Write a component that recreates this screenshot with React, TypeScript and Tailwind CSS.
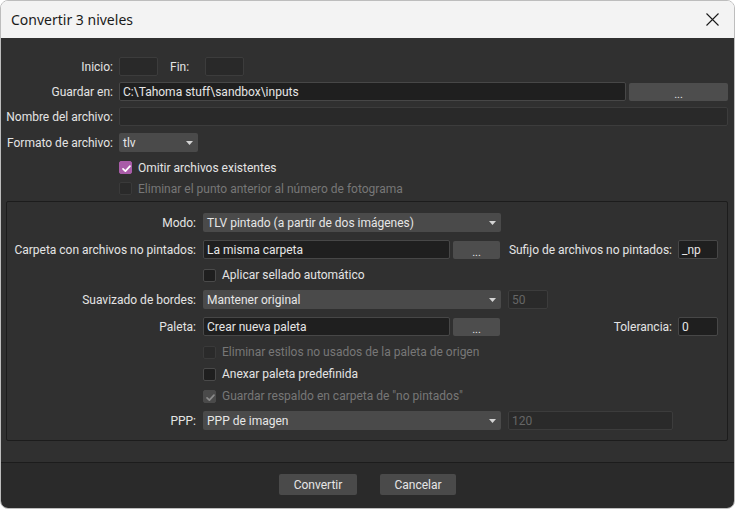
import React from 'react';

const Check = ({ color = '#ffffff' }: { color?: string }) => (
  <svg width="13" height="13" viewBox="0 0 13 13" className="absolute inset-0">
    <polyline points="3,6.8 5.4,9.2 10,4.2" fill="none" stroke={color} strokeWidth="1.7" strokeLinecap="round" strokeLinejoin="round" />
  </svg>
);

interface CheckRowProps {
  label: string;
  checked?: boolean;
  disabled?: boolean;
  h?: string;
}

const CheckRow: React.FC<CheckRowProps> = ({ label, checked, disabled, h = 'h-[22px]' }) => {
  let box = 'bg-[#1f1f1f] border-[#4a4a4a]';
  if (checked && !disabled) box = 'bg-[#a95ca8] border-[#a95ca8]';
  if (disabled && !checked) box = 'bg-[#2a2a2a] border-[#3a3a3a]';
  if (disabled && checked) box = 'bg-[#4a4a4a] border-[#4a4a4a]';
  return (
    <div className={`flex items-center ${h}`}>
      <div className={`relative w-[13px] h-[13px] rounded-[2px] border ${box}`}>
        {checked && <Check color={disabled ? '#8a8a8a' : '#ffffff'} />}
      </div>
      <span className={`ml-[6px] whitespace-nowrap ${disabled ? 'text-[#777777]' : 'text-[#e4e4e4]'}`}>{label}</span>
    </div>
  );
};

const Field = ({ w, value, dark = true, disabled = false }: { w: string; value?: string; dark?: boolean; disabled?: boolean }) => (
  <div
    className={`${w} h-[19px] rounded-[2px] border flex items-center pl-[3px] truncate ${
      disabled
        ? 'bg-[#2a2a2a] border-[#3c3c3c] text-[#666666]'
        : dark
        ? 'bg-[#1f1f1f] border-[#474747] text-[#e6e6e6]'
        : 'bg-[#292929] border-[#3c3c3c] text-[#e6e6e6]'
    }`}
  >
    {value}
  </div>
);

const Select = ({ w, value }: { w: string; value: string }) => (
  <div className={`${w} h-[19px] rounded-[2px] bg-[#4a4a4a] flex items-center justify-between pl-[4px] pr-[5px] text-[#e6e6e6]`}>
    <span>{value}</span>
    <svg width="7" height="4" viewBox="0 0 7 4">
      <polygon points="0,0 7,0 3.5,4" fill="#d4d4d4" />
    </svg>
  </div>
);

const DotsButton = ({ w }: { w: string }) => (
  <div className={`${w} h-[18px] rounded-[2px] bg-[#4d4d4d] flex items-end justify-center pb-[1px] text-[#e6e6e6] leading-none text-[11px]`}>
    ...
  </div>
);

const Label = ({ w, children }: { w: string; children: React.ReactNode }) => (
  <span className={`${w} shrink-0 flex justify-end whitespace-nowrap`}>{children}</span>
);

const App: React.FC = () => {
  return (
    <div className="w-[735px] h-[509px] bg-white">
      <div className="w-[735px] h-[509px] rounded-[8px] border border-[#bdbdbd] overflow-hidden flex flex-col font-['Roboto',sans-serif] text-[12px]">
        <div className="h-[37px] shrink-0 bg-[#f3f3f3] flex items-center justify-between pl-[10px] pr-[15px]">
          <span className="font-['Noto_Sans',sans-serif] text-[14px] text-[#1a1a1a] mt-[-1px]">Convertir 3 niveles</span>
          <svg width="13" height="13" viewBox="0 0 13 13">
            <path d="M0.5 0.5 L12.5 12.5 M12.5 0.5 L0.5 12.5" stroke="#1a1a1a" strokeWidth="1.1" />
          </svg>
        </div>

        <div className="flex-1 bg-[#303030] pl-[5px] pr-[6px] pt-[19px] text-[#e4e4e4]">
          <div className="flex items-center h-[19px]">
            <Label w="w-[107px]">Inicio:</Label>
            <div className="ml-[6px]"><Field w="w-[39px]" dark={false} /></div>
            <span className="ml-[12px] w-[35px]">Fin:</span>
            <Field w="w-[39px]" dark={false} />
          </div>
          <div className="flex items-center h-[19px] mt-[6px]">
            <Label w="w-[107px]">Guardar en:</Label>
            <div className="ml-[6px]"><Field w="w-[507px]" value="C:\Tahoma stuff\sandbox\inputs" /></div>
            <div className="ml-[3px]"><DotsButton w="w-[99px]" /></div>
          </div>
          <div className="flex items-center h-[19px] mt-[6px]">
            <Label w="w-[107px]">Nombre del archivo:</Label>
            <div className="ml-[6px] flex-1"><Field w="w-full" dark={false} /></div>
          </div>
          <div className="flex items-center h-[19px] mt-[7px]">
            <Label w="w-[107px]">Formato de archivo:</Label>
            <div className="ml-[6px]"><Select w="w-[79px]" value="tlv" /></div>
          </div>
          <div className="pl-[113px] mt-[5px]">
            <CheckRow label="Omitir archivos existentes" checked h="h-[21px]" />
            <CheckRow label="Eliminar el punto anterior al número de fotograma" disabled h="h-[21px]" />
          </div>

          <div className="mt-[2px] border border-[#1c1c1c] rounded-[2px] pl-[9px] pr-[9px] pt-[11px] pb-[10px]">
            <div className="flex items-center h-[19px]">
              <Label w="w-[180px]">Modo:</Label>
              <div className="ml-[7px]"><Select w="w-[298px]" value="TLV pintado (a partir de dos imágenes)" /></div>
            </div>
            <div className="flex items-center h-[19px] mt-[8px]">
              <Label w="w-[180px]">Carpeta con archivos no pintados:</Label>
              <div className="ml-[7px]"><Field w="w-[247px]" value="La misma carpeta" /></div>
              <div className="ml-[3px]"><DotsButton w="w-[47px]" /></div>
              <span className="flex-1 text-right whitespace-nowrap">Sufijo de archivos no pintados:</span>
              <div className="ml-[6px]"><Field w="w-[40px]" value="_np" /></div>
            </div>
            <div className="pl-[187px] mt-[5px]">
              <CheckRow label="Aplicar sellado automático" />
            </div>
            <div className="flex items-center h-[19px] mt-[4px]">
              <Label w="w-[180px]">Suavizado de bordes:</Label>
              <div className="ml-[7px]"><Select w="w-[298px]" value="Mantener original" /></div>
              <div className="ml-[7px]"><Field w="w-[40px]" value="50" disabled /></div>
            </div>
            <div className="flex items-center h-[19px] mt-[8px]">
              <Label w="w-[180px]">Paleta:</Label>
              <div className="ml-[7px]"><Field w="w-[247px]" value="Crear nueva paleta" /></div>
              <div className="ml-[3px]"><DotsButton w="w-[47px]" /></div>
              <span className="flex-1 text-right whitespace-nowrap">Tolerancia:</span>
              <div className="ml-[6px]"><Field w="w-[40px]" value="0" /></div>
            </div>
            <div className="pl-[187px] mt-[5px]">
              <CheckRow label="Eliminar estilos no usados de la paleta de origen" disabled />
              <CheckRow label="Anexar paleta predefinida" />
              <CheckRow label={'Guardar respaldo en carpeta de "no pintados"'} checked disabled />
            </div>
            <div className="flex items-center h-[19px] mt-[4px]">
              <Label w="w-[180px]">PPP:</Label>
              <div className="ml-[7px]"><Select w="w-[298px]" value="PPP de imagen" /></div>
              <div className="ml-[7px]"><Field w="w-[165px]" value="120" disabled /></div>
            </div>
          </div>
        </div>

        <div className="h-[46px] shrink-0 bg-[#2a2a2a] border-t border-[#1c1c1c] flex justify-center gap-[23px] pt-[11px]">
          <div className="w-[78px] h-[21px] rounded-[2px] bg-[#4a4a4a] flex items-center justify-center text-[#e6e6e6]">Convertir</div>
          <div className="w-[76px] h-[21px] rounded-[2px] bg-[#4a4a4a] flex items-center justify-center text-[#e6e6e6]">Cancelar</div>
        </div>
      </div>
    </div>
  );
};

export default App;
